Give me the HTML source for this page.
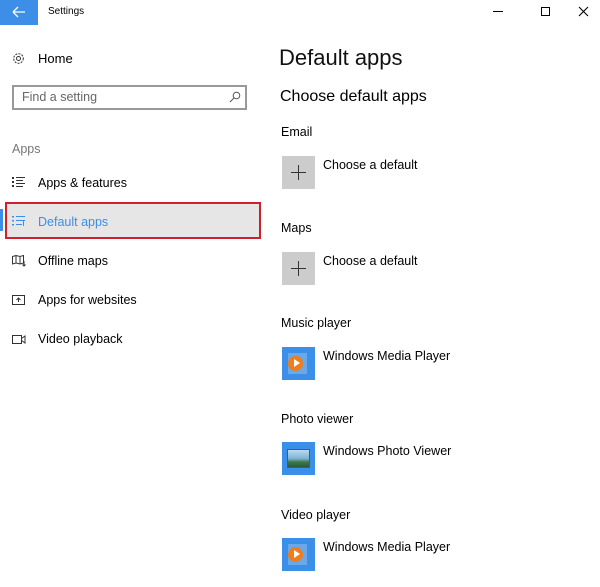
<!DOCTYPE html>
<html><head><style>
*{margin:0;padding:0;box-sizing:border-box}
body{width:600px;height:587px;background:#fff;font-family:"Liberation Sans",sans-serif;color:#000;position:relative;overflow:hidden}
.a{position:absolute;white-space:nowrap}
.t13{font-size:12.5px}
.plus{position:absolute;left:282px;width:33px;height:33px;background:#ccc}
.plus:before{content:"";position:absolute;left:9px;top:16px;width:15px;height:1px;background:#333}
.plus:after{content:"";position:absolute;left:16px;top:9px;width:1px;height:15px;background:#333}
.ic{position:absolute;left:282px;width:33px;height:33px;background:#3b8fe8}
</style></head><body>
<div class="a" style="left:0;top:0;width:38px;height:25px;background:#3d8ee6"></div>
<svg class="a" style="left:12px;top:6px" width="14" height="12"><path d="M1 6H13M1 6L6 1M1 6L6 11" stroke="#fff" stroke-width="1.3" fill="none"/></svg>
<div class="a" style="left:48px;top:6px;font-size:10px">Settings</div>
<div class="a" style="left:493px;top:11px;width:10px;height:1px;background:#000"></div>
<div class="a" style="left:541px;top:7px;width:9px;height:9px;border:1px solid #000"></div>
<svg class="a" style="left:578px;top:6px" width="11" height="11"><path d="M1 1L10 10M10 1L1 10" stroke="#000" stroke-width="1.1"/></svg>

<svg class="a" style="left:12px;top:52px" width="13" height="13"><circle cx="6.5" cy="6.5" r="2" fill="none" stroke="#333"/><circle cx="6.5" cy="6.5" r="4.8" fill="none" stroke="#333" stroke-dasharray="2 1.2"/></svg>
<div class="a t13" style="left:38px;top:51px;font-size:13px">Home</div>
<div class="a" style="left:12px;top:85px;width:235px;height:25px;border:2px solid #999"></div>
<div class="a" style="left:22px;top:90px;font-size:12.5px;color:#666">Find a setting</div>
<svg class="a" style="left:229px;top:91px" width="12" height="12"><circle cx="7.5" cy="4.5" r="3.3" fill="none" stroke="#555"/><path d="M5 7L1 11" stroke="#555"/></svg>
<div class="a" style="left:12px;top:142px;font-size:12.5px;color:#777">Apps</div>

<svg class="a" style="left:12px;top:177px" width="13" height="11"><g fill="#333"><rect x="0" y="0" width="2" height="2"/><rect x="0" y="4" width="2" height="2"/><rect x="0" y="8" width="2" height="2"/><rect x="4" y="0" width="9" height="1"/><rect x="4" y="3" width="7" height="1"/><rect x="4" y="6" width="9" height="1"/><rect x="4" y="9" width="7" height="1"/></g></svg>
<div class="a" style="left:38px;top:176px;font-size:12.5px">Apps &amp; features</div>

<div class="a" style="left:5px;top:202px;width:256px;height:37px;background:#e6e6e6;border:2px solid #d0202e"></div>
<div class="a" style="left:0;top:209px;width:3px;height:22px;background:#3d8ee6"></div>
<svg class="a" style="left:12px;top:216px" width="13" height="11"><g fill="#3d8ee6"><rect x="0" y="0" width="2" height="1.5"/><rect x="0" y="4" width="2" height="1.5"/><rect x="0" y="8" width="2" height="1.5"/><rect x="4" y="0" width="9" height="1"/><rect x="4" y="4" width="9" height="1"/><rect x="4" y="8" width="6" height="1"/><rect x="11" y="5" width="1" height="5"/></g></svg>
<div class="a" style="left:38px;top:215px;font-size:12.5px;color:#3d8ee6">Default apps</div>

<svg class="a" style="left:12px;top:255px" width="14" height="12"><path d="M0.5 1.5L4 0.5L8 1.5L11.5 0.5V8L8 9L4 8L0.5 9Z M4 0.5V8 M8 1.5V9 M12 6V11 M10.5 9.5L12 11L13.5 9.5" fill="none" stroke="#333"/></svg>
<div class="a" style="left:38px;top:254px;font-size:12.5px">Offline maps</div>
<svg class="a" style="left:12px;top:295px" width="13" height="10"><path d="M0.5 0.5H12.5V9.5H0.5Z M6.5 7V3 M4.5 5L6.5 3L8.5 5" fill="none" stroke="#333"/></svg>
<div class="a" style="left:38px;top:293px;font-size:12.5px">Apps for websites</div>
<svg class="a" style="left:12px;top:335px" width="14" height="9"><path d="M0.5 0.5H9.5V8.5H0.5Z M9.5 3.5L13 1V8L9.5 5.5" fill="none" stroke="#333"/></svg>
<div class="a" style="left:38px;top:332px;font-size:12.5px">Video playback</div>

<div class="a" style="left:279px;top:45px;font-size:22px;color:#111">Default apps</div>
<div class="a" style="left:280px;top:88px;font-size:16px">Choose default apps</div>
<div class="a" style="left:281px;top:125px;font-size:12.5px">Email</div>
<div class="plus" style="top:156px"></div>
<div class="a" style="left:323px;top:158px;font-size:12.5px">Choose a default</div>
<div class="a" style="left:281px;top:221px;font-size:12.5px">Maps</div>
<div class="plus" style="top:252px"></div>
<div class="a" style="left:323px;top:254px;font-size:12.5px">Choose a default</div>
<div class="a" style="left:281px;top:316px;font-size:12.5px">Music player</div>
<div class="ic" style="top:347px"><div class="a" style="left:6px;top:6px;width:19px;height:21px;background:#6aa9e8"></div><div class="a" style="left:6px;top:9px;width:15px;height:15px;border-radius:50%;background:#f07d1a"></div><div class="a" style="left:12px;top:12px;border-left:6px solid #fff;border-top:4.5px solid transparent;border-bottom:4.5px solid transparent"></div></div>
<div class="a" style="left:323px;top:349px;font-size:12.5px">Windows Media Player</div>
<div class="a" style="left:281px;top:412px;font-size:12.5px">Photo viewer</div>
<div class="ic" style="top:442px"><div class="a" style="left:5px;top:7px;width:23px;height:19px;background:linear-gradient(#bcd8ea,#7fb4d8 50%,#3e7a4a 70%,#2a5a3a);border:1px solid #2d5f9a"></div></div>
<div class="a" style="left:323px;top:444px;font-size:12.5px">Windows Photo Viewer</div>
<div class="a" style="left:281px;top:508px;font-size:12.5px">Video player</div>
<div class="ic" style="top:538px"><div class="a" style="left:6px;top:6px;width:19px;height:21px;background:#6aa9e8"></div><div class="a" style="left:6px;top:9px;width:15px;height:15px;border-radius:50%;background:#f07d1a"></div><div class="a" style="left:12px;top:12px;border-left:6px solid #fff;border-top:4.5px solid transparent;border-bottom:4.5px solid transparent"></div></div>
<div class="a" style="left:323px;top:540px;font-size:12.5px">Windows Media Player</div>
</body></html>
